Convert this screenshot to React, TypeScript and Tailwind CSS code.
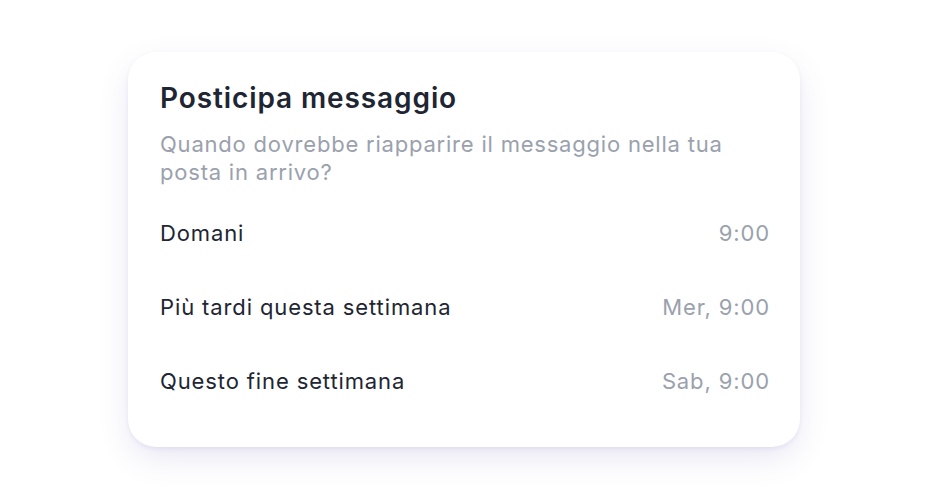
const rows = [
  { label: "Domani", time: "9:00" },
  { label: "Più tardi questa settimana", time: "Mer, 9:00" },
  { label: "Questo fine settimana", time: "Sab, 9:00" },
];

export default function App() {
  return (
    <div className="w-[928px] h-[500px] bg-white flex justify-center pt-[52px] font-['Inter',sans-serif]">
      <div className="w-[672px] h-[395px] bg-white rounded-[28px] pl-8 pr-[30px] pt-[28px] shadow-[0_2px_4px_rgba(80,70,170,0.08),0_12px_32px_-2px_rgba(90,80,170,0.14)]">
        <h1 className="text-[28px] leading-9 font-semibold text-[#1e2533] tracking-[0.032em]">Posticipa messaggio</h1>
        <p className="mt-[14px] text-[22px] leading-7 text-[#9aa1ad] tracking-[0.036em]">
          Quando dovrebbe riapparire il messaggio nella tua posta in arrivo?
        </p>
        <ul className="mt-[10px]">
          {rows.map((r) => (
            <li key={r.label} className="h-[74px] flex items-center justify-between text-[22px] tracking-[0.04em]">
              <span className="text-[#1e2533]">{r.label}</span>
              <span className="text-[#9aa1ad]">{r.time}</span>
            </li>
          ))}
        </ul>
      </div>
    </div>
  );
}
